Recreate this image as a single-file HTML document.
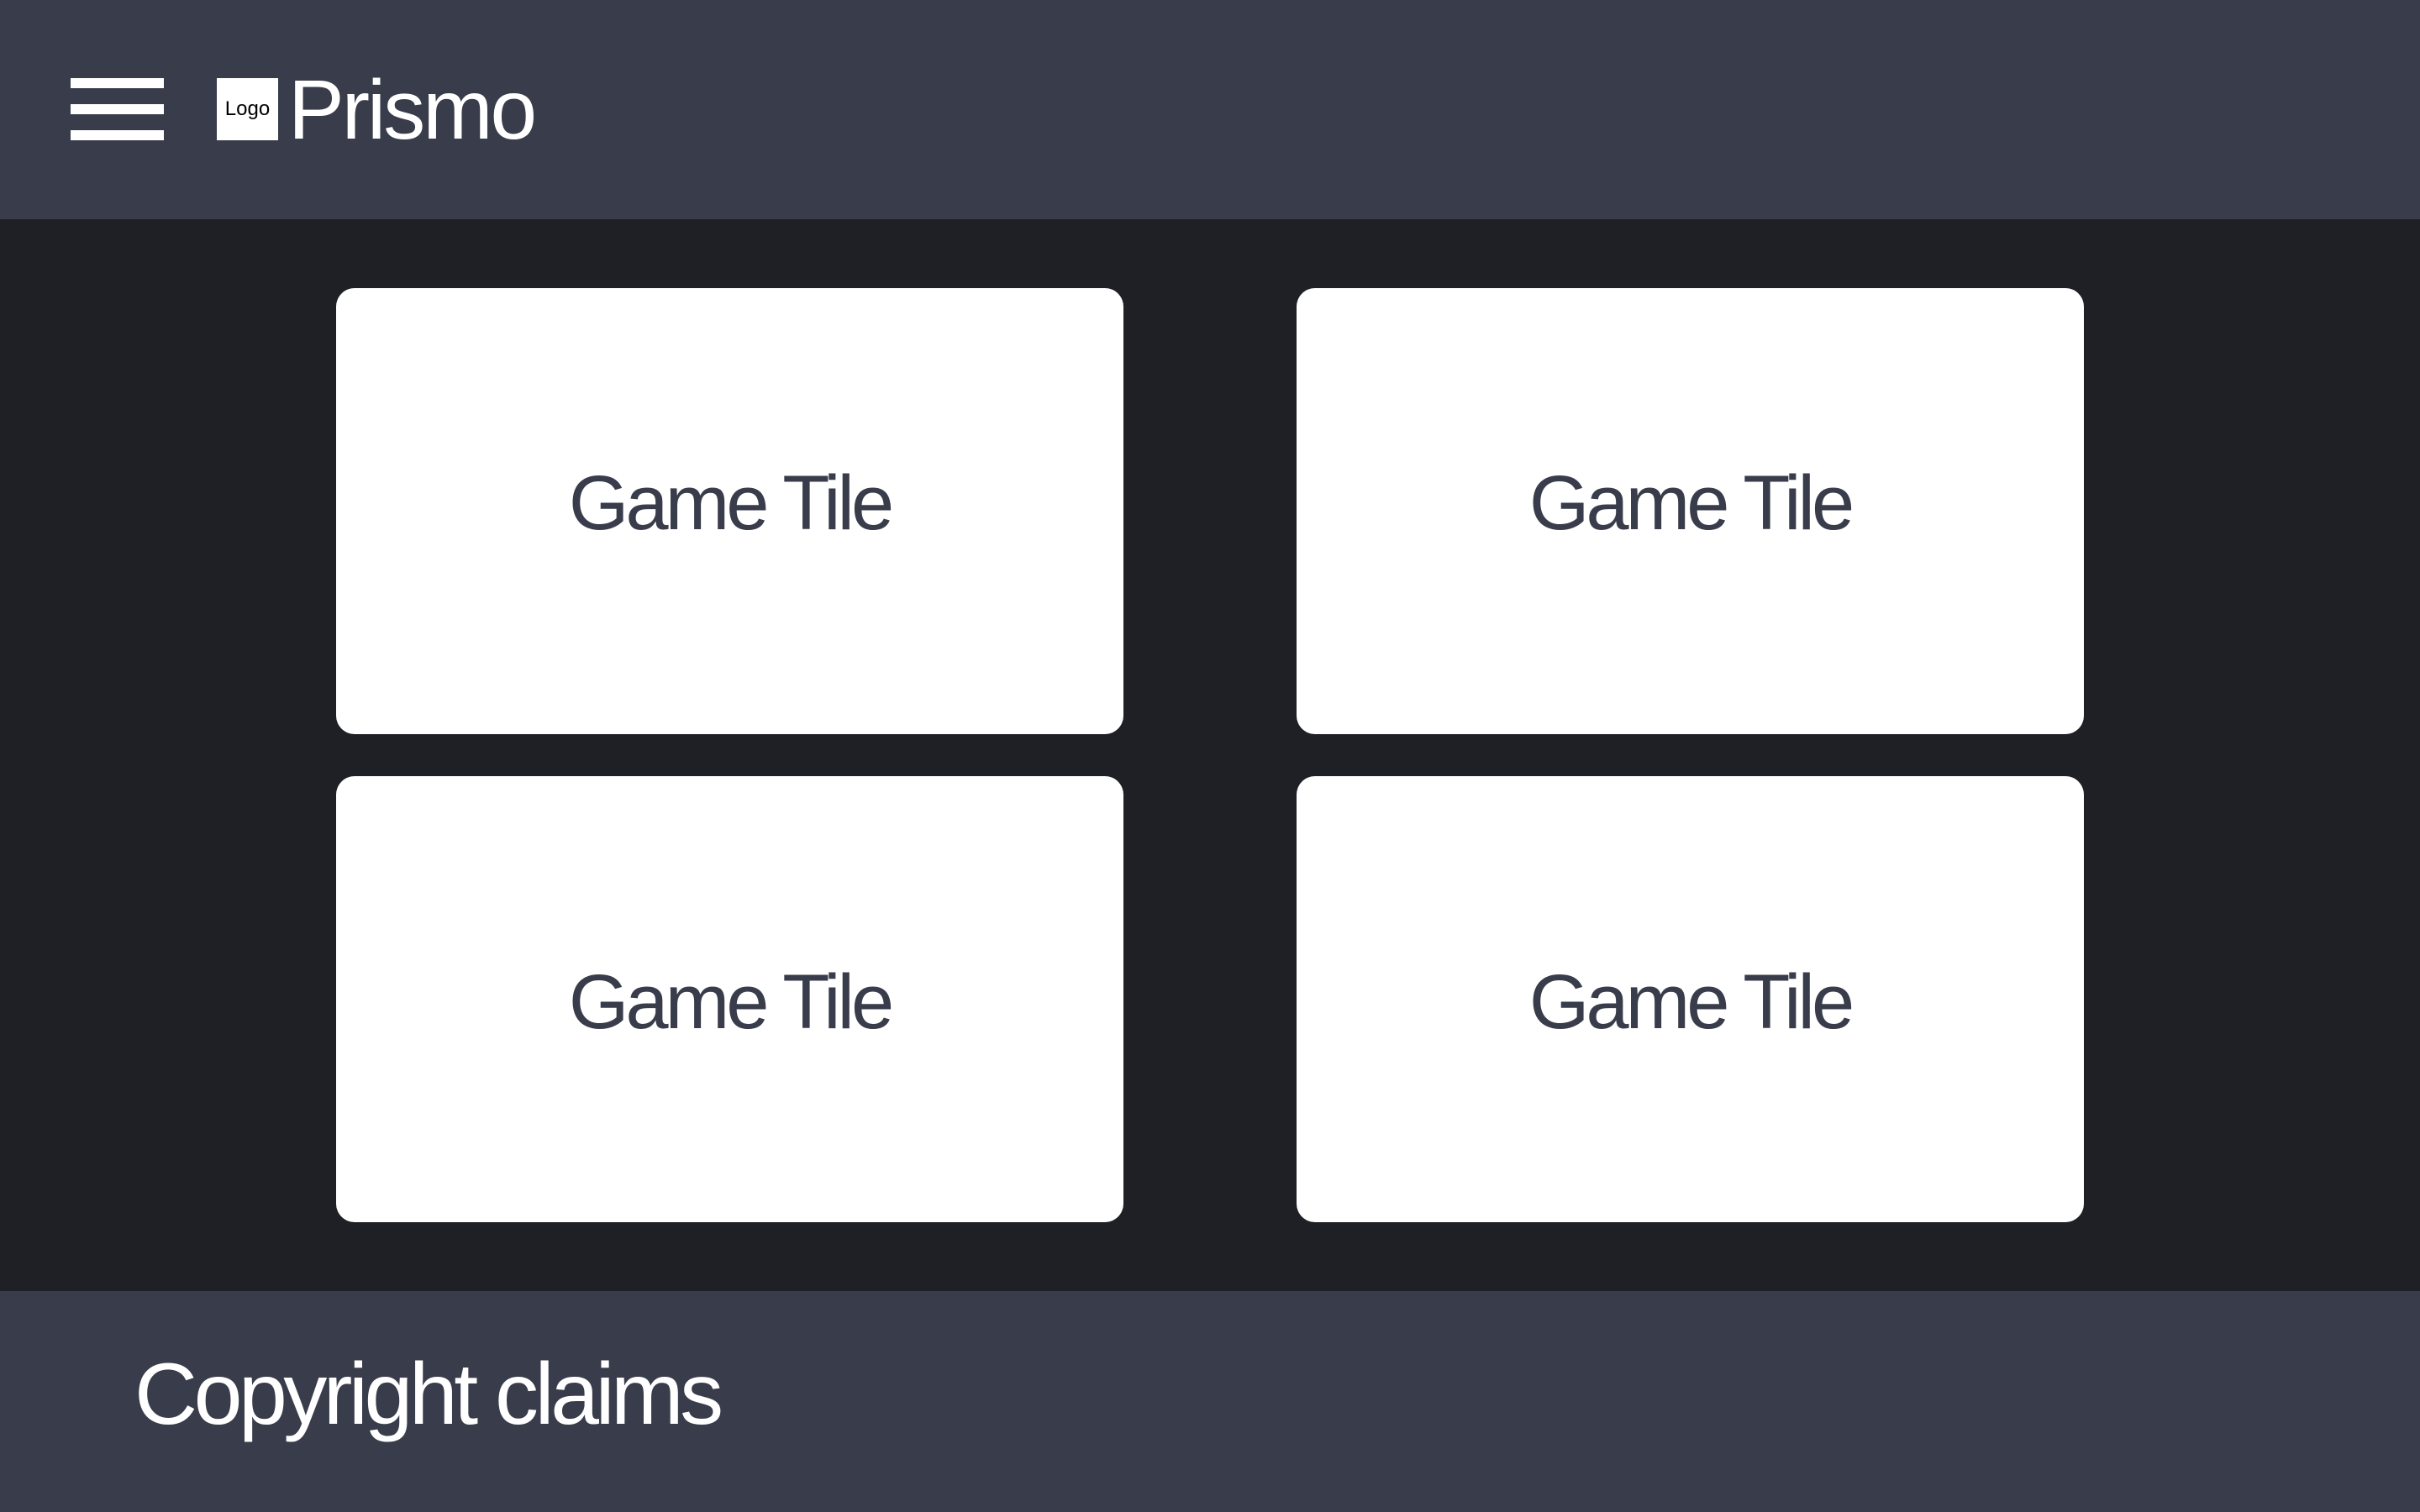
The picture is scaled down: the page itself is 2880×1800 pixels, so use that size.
<!DOCTYPE html>
<html><head><style>
body{margin:0;width:2880px;height:1800px;overflow:hidden;font-family:"Liberation Sans",sans-serif;background:#1f2025;position:relative}
.h{position:absolute;left:0;top:0;width:2880px;height:261px;background:#393c4a}
.f{position:absolute;left:0;top:1537px;width:2880px;height:263px;background:#393c4a}
.bar{position:absolute;left:84px;width:111px;height:12px;background:#fff}
.logo{position:absolute;left:258px;top:93px;width:73px;height:74px;background:#fff;color:#000;font-size:24px;line-height:74px;text-align:center}
.p{position:absolute;left:343px;top:66px;font-size:100px;color:#fff;line-height:130px;letter-spacing:-3px}
.t{position:absolute;width:937px;height:531px;background:#fff;border-radius:22px;color:#393c4a;font-size:92px;display:flex;align-items:center;justify-content:center;letter-spacing:-4px}
.t span{position:relative;top:-9px}
.t.b span{top:4px}
.c{position:absolute;left:160px;top:1595px;font-size:104px;color:#fff;line-height:130px;letter-spacing:-4.5px}
</style></head><body>
<div class="h">
<div class="bar" style="top:93px"></div><div class="bar" style="top:124px"></div><div class="bar" style="top:155px"></div>
<div class="logo">Logo</div>
<div class="p">Prismo</div>
</div>
<div class="t" style="left:400px;top:343px"><span>Game Tile</span></div>
<div class="t" style="left:1543px;top:343px"><span>Game Tile</span></div>
<div class="t b" style="left:400px;top:924px"><span>Game Tile</span></div>
<div class="t b" style="left:1543px;top:924px"><span>Game Tile</span></div>
<div class="f"></div>
<div class="c">Copyright claims</div>
</body></html>
